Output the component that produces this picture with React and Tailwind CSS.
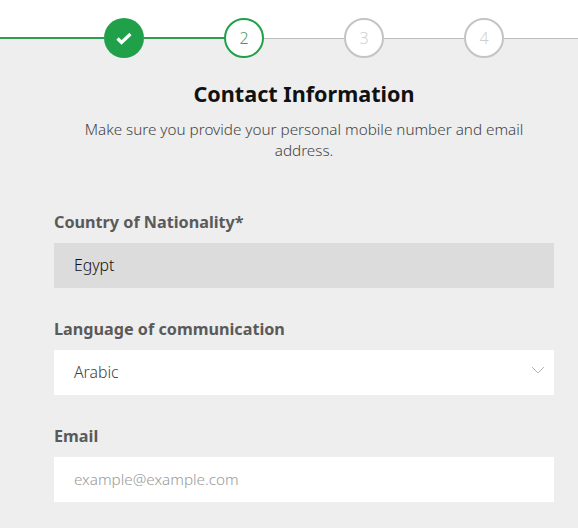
function Step({ children, active, done }) {
  if (done) {
    return (
      <div className="w-10 h-10 shrink-0 rounded-full bg-[#21a04a] flex items-center justify-center">
        <svg width="16" height="13" viewBox="0 0 16 13" fill="none" stroke="#fff" strokeWidth="3.2">
          <path d="M1.5 6.5l4 4 9-8.5" />
        </svg>
      </div>
    );
  }
  return (
    <div
      className={`w-10 h-10 shrink-0 rounded-full bg-white border-2 flex items-center justify-center text-[16px] font-light ${
        active ? "border-[#21a04a] text-[#3f9a63]" : "border-[#c4c4c4] text-[#cfcfcf]"
      }`}
    >
      {children}
    </div>
  );
}

function Line({ green, className }) {
  return <div className={`${green ? "h-[2px] bg-[#2f9e55]" : "h-px mt-px bg-[#bdbdbd]"} ${className}`} />;
}

export default function App() {
  return (
    <div className="w-[578px] h-[528px] overflow-hidden bg-[#eeeeee] font-['Noto_Sans','Open_Sans',sans-serif]">
      <div className="bg-white h-[38px] pt-[18px]">
        <div className="flex items-center h-10">
          <Line green className="w-[104px]" />
          <Step done />
          <Line green className="w-20" />
          <Step active>2</Step>
          <Line className="w-20" />
          <Step>3</Step>
          <Line className="w-20" />
          <Step>4</Step>
          <Line className="flex-1" />
        </div>
      </div>

      <div className="pl-[54px] pr-6">
        <h1 className="mt-[41px] text-center text-[21.6px] leading-[30px] font-bold text-[#111]">Contact Information</h1>
        <p className="mt-[10px] mx-auto w-[460px] text-center text-[15.25px] leading-[21px] font-light text-[#444]">
          Make sure you provide your personal mobile number and email address.
        </p>

        <label className="block mt-[49px] text-[16.2px] leading-[24px] font-bold text-[#5a5a5a]">Country of Nationality*</label>
        <div className="mt-[9px] h-[45px] bg-[#dcdcdc] pl-5 flex items-center text-[15.8px] font-light text-[#111]">Egypt</div>

        <label className="block mt-[29px] text-[16.2px] leading-[24px] font-bold text-[#5a5a5a]">Language of communication</label>
        <div className="mt-[9px] h-[45px] bg-white pl-5 pr-[9px] flex items-center justify-between text-[15.8px] font-light text-[#444]">
          Arabic
          <svg width="14" height="8" viewBox="0 0 14 8" fill="none" stroke="#b5b5b5" strokeWidth="1" className="-mt-1.5">
            <path d="M1 1l6 6 6-6" />
          </svg>
        </div>

        <label className="block mt-[29px] text-[16.2px] leading-[24px] font-bold text-[#5a5a5a]">Email</label>
        <input
          readOnly
          placeholder="example@example.com"
          className="block mt-[9px] w-full h-[45px] bg-white pl-5 pb-0.5 text-[15.25px] font-light outline-none placeholder:text-[#9a9a9a]"
        />
      </div>
    </div>
  );
}
